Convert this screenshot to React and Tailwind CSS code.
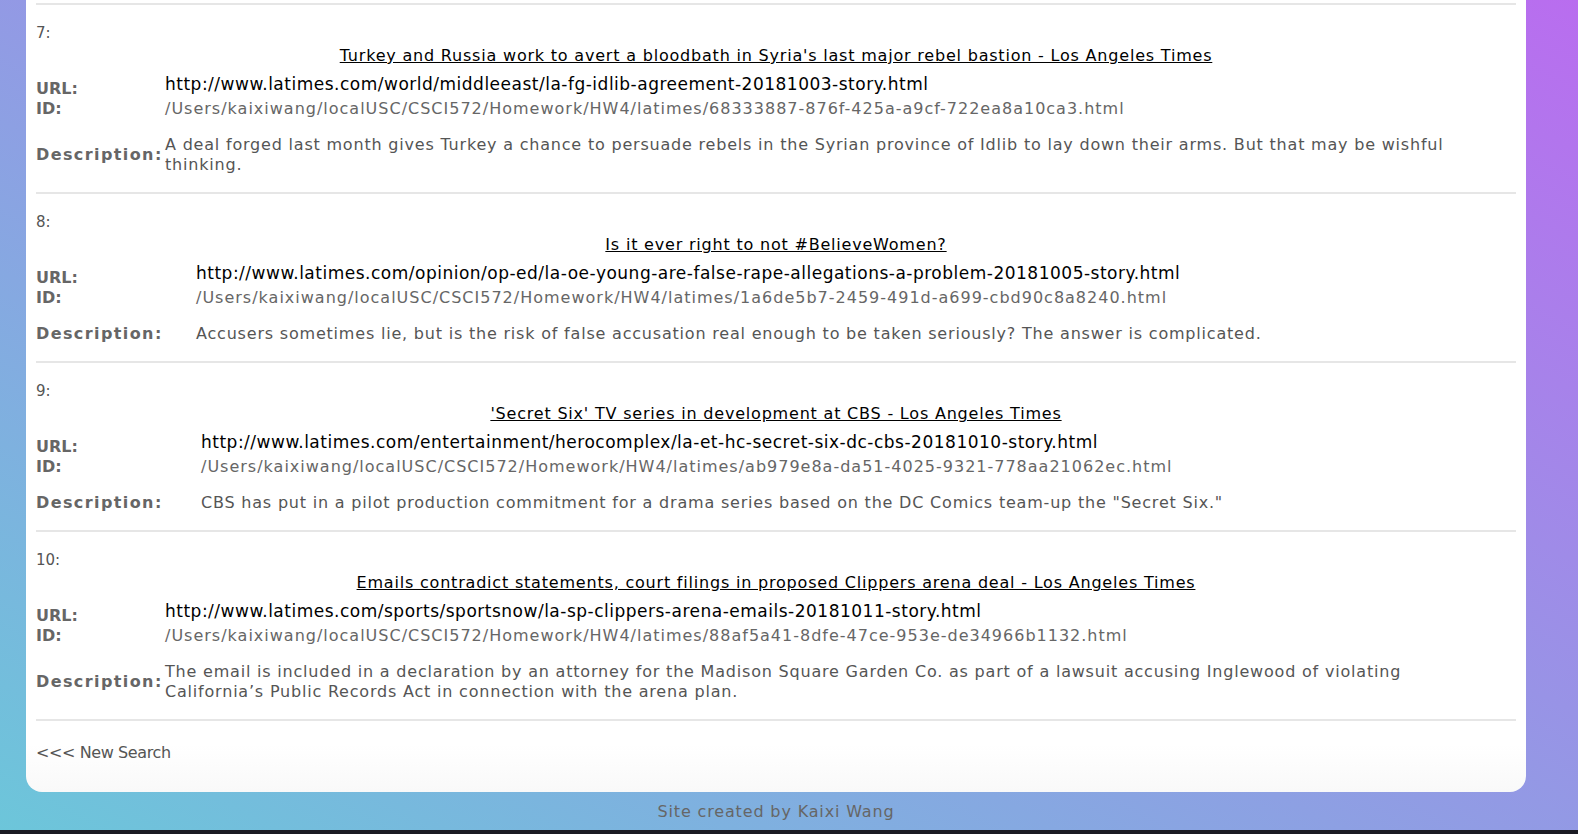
const items = [
  {
    n: 7,
    title: "Turkey and Russia work to avert a bloodbath in Syria's last major rebel bastion - Los Angeles Times",
    url: 'http://www.latimes.com/world/middleeast/la-fg-idlib-agreement-20181003-story.html',
    id: '/Users/kaixiwang/localUSC/CSCI572/Homework/HW4/latimes/68333887-876f-425a-a9cf-722ea8a10ca3.html',
    desc: 'A deal forged last month gives Turkey a chance to persuade rebels in the Syrian province of Idlib to lay down their arms. But that may be wishful thinking.',
    cols: 'grid-cols-[129px_1fr]',
  },
  {
    n: 8,
    title: 'Is it ever right to not #BelieveWomen?',
    url: 'http://www.latimes.com/opinion/op-ed/la-oe-young-are-false-rape-allegations-a-problem-20181005-story.html',
    id: '/Users/kaixiwang/localUSC/CSCI572/Homework/HW4/latimes/1a6de5b7-2459-491d-a699-cbd90c8a8240.html',
    desc: 'Accusers sometimes lie, but is the risk of false accusation real enough to be taken seriously? The answer is complicated.',
    cols: 'grid-cols-[160px_1fr]',
  },
  {
    n: 9,
    title: "'Secret Six' TV series in development at CBS - Los Angeles Times",
    url: 'http://www.latimes.com/entertainment/herocomplex/la-et-hc-secret-six-dc-cbs-20181010-story.html',
    id: '/Users/kaixiwang/localUSC/CSCI572/Homework/HW4/latimes/ab979e8a-da51-4025-9321-778aa21062ec.html',
    desc: 'CBS has put in a pilot production commitment for a drama series based on the DC Comics team-up the "Secret Six."',
    cols: 'grid-cols-[165px_1fr]',
  },
  {
    n: 10,
    title: 'Emails contradict statements, court filings in proposed Clippers arena deal - Los Angeles Times',
    url: 'http://www.latimes.com/sports/sportsnow/la-sp-clippers-arena-emails-20181011-story.html',
    id: '/Users/kaixiwang/localUSC/CSCI572/Homework/HW4/latimes/88af5a41-8dfe-47ce-953e-de34966b1132.html',
    desc: "The email is included in a declaration by an attorney for the Madison Square Garden Co. as part of a lawsuit accusing Inglewood of violating California’s Public Records Act in connection with the arena plan.",
    cols: 'grid-cols-[129px_1fr]',
  },
];

function Result({ item }) {
  return (
    <div className="border-t-2 border-[#e6e6e6] pt-[18px] pb-[17px]">
      <div className="text-[15px] leading-[20px] text-[#555]">{item.n}:</div>
      <div className="mt-[2px] text-center text-[16px] leading-[22px] tracking-[0.8px]">
        <a className="text-black underline">{item.title}</a>
      </div>

      {/* url + id */}
      <div className={`grid ${item.cols} mt-[7px]`}>
        <div className="pt-[5px] text-[16px] leading-[20px] font-bold text-[#666]">URL:</div>
        <div className="text-[17px] leading-[20px] text-black pb-[5px] tracking-[0.5px]">{item.url}</div>
        <div className="text-[16px] leading-[20px] font-bold text-[#666]">ID:</div>
        <div className="text-[16px] leading-[20px] text-[#666] tracking-[1px]">{item.id}</div>
      </div>

      {/* description */}
      <div className={`grid ${item.cols} mt-[16px] items-center`}>
        <div className="text-[16px] leading-[20px] font-bold text-[#666] tracking-[1.4px]">Description:</div>
        <div className="pr-[14px] text-[16px] leading-[20px] text-[#555] tracking-[0.8px]">{item.desc}</div>
      </div>
    </div>
  );
}

export default function App() {
  return (
    <div
      className="h-[834px] overflow-hidden flex flex-col bg-[linear-gradient(to_top_right,#6cc6da,#b96def)]"
      style={{ fontFamily: '"DejaVu Sans", "Open Sans", sans-serif' }}
    >
      <div className="ml-[26px] mr-[52px] bg-[linear-gradient(to_bottom,#ffffff_94%,#f9f9f9)] rounded-b-[16px] px-[10px] pt-[3px] pb-[27px]">
        {items.map((it) => (
          <Result key={it.n} item={it} />
        ))}
        <div className="border-t-2 border-[#e6e6e6] pt-[20px]">
          <a className="text-[16px] leading-[20px] text-[#555] tracking-[-0.4px]">&lt;&lt;&lt; New Search</a>
        </div>
      </div>
      <div className="ml-[26px] mr-[52px] mt-[10px] text-center text-[16px] leading-[20px] text-[#666] tracking-[0.85px]">
        Site created by Kaixi Wang
      </div>
      <div className="mt-auto h-[4px] bg-[#1a1a22]" />
    </div>
  );
}
